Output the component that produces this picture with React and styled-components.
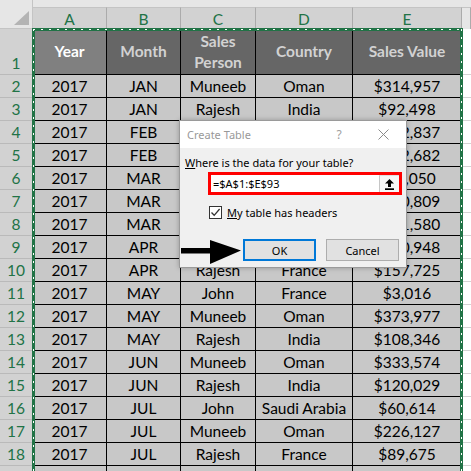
import React from "react";
import styled, { createGlobalStyle } from "styled-components";

const GlobalStyle = createGlobalStyle`
  html, body {
    margin: 0;
    padding: 0;
  }
  body {
    width: 471px;
    height: 471px;
    overflow: hidden;
    background: #fff;
    font-family: Lato, "Liberation Sans", sans-serif;
  }
  * {
    box-sizing: border-box;
  }
`;

const COLS = "33px 74px 74px 75px 97px 109px 1fr";
const GREEN = "#217346";

const Sheet = styled.div`
  position: relative;
  width: 471px;
  height: 471px;
  overflow: hidden;
`;

const ColumnBar = styled.div`
  display: grid;
  grid-template-columns: ${COLS};
  align-items: end;
  height: 29px;
  background: #e6e6e6;
`;

const Corner = styled.div`
  position: relative;
  height: 29px;
  border-right: 1px solid #c4c4c4;
  border-bottom: 1px solid #c4c4c4;
  &::after {
    content: "";
    position: absolute;
    right: 3px;
    bottom: 3px;
    width: 15px;
    height: 14px;
    background: #b4b4b4;
    clip-path: polygon(100% 0, 100% 100%, 0 100%);
  }
`;

const ColHead = styled.div`
  height: 22px;
  display: flex;
  align-items: center;
  justify-content: center;
  border-top: 1px solid #c4c4c4;
  border-right: 1px solid #ababab;
  background: ${(p) => (p.$selected ? "#d2d2d2" : "#e6e6e6")};
  color: ${GREEN};
  font-size: 15.5px;
`;

const Row = styled.div`
  display: grid;
  grid-template-columns: ${COLS};
  height: ${(p) => (p.$tall ? 46 : 23)}px;
`;

const RowHead = styled.div`
  display: flex;
  justify-content: center;
  align-items: ${(p) => (p.$tall ? "flex-end" : "center")};
  padding-bottom: ${(p) => (p.$tall ? 2 : 0)}px;
  background: #d2d2d2;
  color: ${GREEN};
  font-size: 15.5px;
  border-right: 1px solid #ababab;
  border-bottom: 1px solid #bababa;
`;

const HeadCell = styled.div`
  display: flex;
  align-items: center;
  justify-content: center;
  text-align: center;
  line-height: 21px;
  font-size: 15.5px;
  font-weight: 700;
  background: ${(p) => (p.$active ? "#808080" : "#666666")};
  color: ${(p) => (p.$active ? "#ffffff" : "#d2d2d2")};
  border-right: 1px solid #000;
  border-bottom: 1px solid #000;
`;

const Cell = styled.div`
  display: flex;
  align-items: center;
  justify-content: center;
  background: #c8c8c8;
  color: #000;
  font-size: 15.5px;
  white-space: nowrap;
  border-right: 1px solid #000;
  border-bottom: 1px solid #000;
`;

const Blank = styled.div`
  background: #fff;
  border-bottom: 1px solid #d4d4d4;
`;

const SelectionFrame = styled.div`
  position: absolute;
  left: 32px;
  top: 28px;
  width: 431px;
  height: 460px;
  border: 3px solid ${GREEN};
  pointer-events: none;
  &::after {
    content: "";
    position: absolute;
    inset: -2px;
    background:
      repeating-linear-gradient(90deg, #fff 0 2px, transparent 2px 8px) top / 100% 1px no-repeat,
      repeating-linear-gradient(180deg, #fff 0 2px, transparent 2px 8px) left / 1px 100% no-repeat,
      repeating-linear-gradient(180deg, #fff 0 2px, transparent 2px 8px) right / 1px 100% no-repeat;
  }
`;

const Dialog = styled.div`
  position: absolute;
  left: 179px;
  top: 120px;
  width: 228px;
  height: 148px;
  display: flex;
  flex-direction: column;
  border: 1px solid #9a9a9a;
  background: #f0f0f0;
  box-shadow: 0 0 5px rgba(0, 0, 0, 0.25);
  font-family: "Noto Sans", "Liberation Sans", sans-serif;
  font-size: 11px;
  color: #000;
`;

const TitleBar = styled.div`
  height: 27px;
  display: flex;
  align-items: center;
  padding-left: 7px;
  background: #fff;
  color: #999;
`;

const Title = styled.span`
  flex: 1;
`;

const HelpButton = styled.span`
  width: 30px;
  margin-right: 7px;
  text-align: center;
  font-size: 12px;
  color: #a0a0a0;
`;

const CloseButton = styled.span`
  width: 45px;
  display: flex;
  justify-content: center;
`;

const Body = styled.div`
  display: flex;
  flex-direction: column;
  padding: 7px 0 0 5px;
`;

const Label = styled.div`
  line-height: 15px;
`;

const RangeBox = styled.div`
  margin: 2px 0 0 23px;
  width: 194px;
  height: 23px;
  display: flex;
  border: 3px solid #ff0000;
  background: #fff;
`;

const RangeText = styled.span`
  flex: 1;
  display: flex;
  align-items: center;
  padding-left: 2px;
`;

const CollapseButton = styled.span`
  width: 20px;
  display: flex;
  align-items: center;
  justify-content: center;
  background: #f7f7f7;
  border-left: 1px solid #c6c6c6;
  border-top: 1px solid #e0e0e0;
`;

const CheckRow = styled.label`
  margin: 11px 0 0 24px;
  height: 13px;
  display: flex;
  align-items: center;
  gap: 5px;
`;

const CheckBox = styled.span`
  width: 13px;
  height: 13px;
  display: flex;
  align-items: center;
  justify-content: center;
  border: 1px solid #333;
  background: #fff;
`;

const ButtonRow = styled.div`
  margin-top: 20px;
  padding-right: 7px;
  display: flex;
  justify-content: flex-end;
  gap: 10px;
`;

const Button = styled.button`
  width: 73px;
  height: 22px;
  padding: 0;
  font: inherit;
  color: #000;
  background: #e1e1e1;
  border: ${(p) => (p.$default ? "2px solid #0078d7" : "1px solid #adadad")};
`;

const Pointer = styled.svg`
  position: absolute;
  left: 180px;
  top: 239px;
`;

const rows = [
  ["2017", "JAN", "Muneeb", "Oman", "$314,957"],
  ["2017", "JAN", "Rajesh", "India", "$92,498"],
  ["2017", "FEB", "John", "France", "$122,837"],
  ["2017", "FEB", "Muneeb", "Oman", "$272,682"],
  ["2017", "MAR", "Rajesh", "India", "$81,050"],
  ["2017", "MAR", "John", "France", "$140,809"],
  ["2017", "MAR", "Muneeb", "Oman", "$211,580"],
  ["2017", "APR", "John", "France", "$200,948"],
  ["2017", "APR", "Rajesh", "France", "$157,725"],
  ["2017", "MAY", "John", "France", "$3,016"],
  ["2017", "MAY", "Muneeb", "Oman", "$373,977"],
  ["2017", "MAY", "Rajesh", "India", "$108,346"],
  ["2017", "JUN", "Muneeb", "Oman", "$333,574"],
  ["2017", "JUN", "Rajesh", "India", "$120,029"],
  ["2017", "JUL", "John", "Saudi Arabia", "$60,614"],
  ["2017", "JUL", "Muneeb", "Oman", "$226,127"],
  ["2017", "JUL", "Rajesh", "France", "$89,675"],
  // row 19 only peeks in at the bottom edge, its text is below the fold
  ["", "", "", "", ""],
];

const App = () => {
  return (
    <Sheet>
      <GlobalStyle />
      <ColumnBar>
        <Corner />
        {["A", "B", "C", "D", "E"].map((c) => (
          <ColHead key={c} $selected>
            {c}
          </ColHead>
        ))}
        <ColHead />
      </ColumnBar>

      <Row $tall>
        <RowHead $tall>1</RowHead>
        <HeadCell $active>Year</HeadCell>
        <HeadCell>Month</HeadCell>
        <HeadCell>
          Sales
          <br />
          Person
        </HeadCell>
        <HeadCell>Country</HeadCell>
        <HeadCell>Sales Value</HeadCell>
        <Blank />
      </Row>

      {rows.map((r, i) => (
        <Row key={i}>
          <RowHead>{i < 17 ? i + 2 : ""}</RowHead>
          {r.map((v, j) => (
            <Cell key={j}>{v}</Cell>
          ))}
          <Blank />
        </Row>
      ))}

      <SelectionFrame />

      <Dialog>
        <TitleBar>
          <Title>Create Table</Title>
          <HelpButton>?</HelpButton>
          <CloseButton>
            <svg width="11" height="11" viewBox="0 0 11 11">
              <path d="M0.5 0.5 L10.5 10.5 M10.5 0.5 L0.5 10.5" stroke="#8a8a8a" strokeWidth="1" fill="none" />
            </svg>
          </CloseButton>
        </TitleBar>
        <Body>
          <Label>
            <u>W</u>here is the data for your table?
          </Label>
          <RangeBox>
            <RangeText>=$A$1:$E$93</RangeText>
            <CollapseButton>
              <svg width="9" height="11" viewBox="0 0 9 11">
                <path d="M4.5 0 L9 4.6 L6 4.6 L6 8 L3 8 L3 4.6 L0 4.6 Z" fill="#000" />
                <rect x="0" y="9.3" width="9" height="1.7" fill="#000" />
              </svg>
            </CollapseButton>
          </RangeBox>
          <CheckRow>
            <CheckBox>
              <svg width="11" height="11" viewBox="0 0 11 11">
                <path d="M1.5 5.5 L4.2 8.3 L9.6 2" stroke="#333" strokeWidth="1.3" fill="none" />
              </svg>
            </CheckBox>
            <span>
              <u>M</u>y table has headers
            </span>
          </CheckRow>
          <ButtonRow>
            <Button $default>OK</Button>
            <Button>Cancel</Button>
          </ButtonRow>
        </Body>
      </Dialog>

      <Pointer width="62" height="26" viewBox="0 0 62 26">
        <rect x="1" y="9" width="31" height="5.5" fill="#000" />
        <path d="M30 1 L61 11.5 L30 25 Z" fill="#000" />
      </Pointer>
    </Sheet>
  );
};

export default App;
